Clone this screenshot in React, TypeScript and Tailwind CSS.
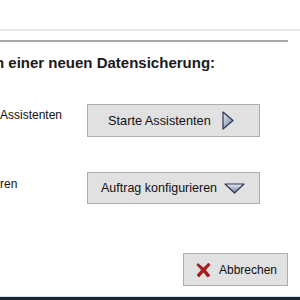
import type { ReactNode } from "react";

function ArrowRight() {
  return (
    <svg width="12" height="19" viewBox="0 0 12 19">
      <defs>
        <linearGradient id="gr" x1="0" y1="0" x2="1" y2="1">
          <stop offset="0" stopColor="#e4eaf4" />
          <stop offset="1" stopColor="#6c7c9c" />
        </linearGradient>
      </defs>
      <path d="M1 1 L11 9.5 L1 18 Z" fill="url(#gr)" stroke="#2c3654" strokeWidth="1.2" strokeLinejoin="round" />
    </svg>
  );
}

function ArrowDown() {
  return (
    <svg width="21" height="11" viewBox="0 0 21 11">
      <defs>
        <linearGradient id="gd" x1="0" y1="0" x2="0" y2="1">
          <stop offset="0" stopColor="#e8edf5" />
          <stop offset="1" stopColor="#6a7a9a" />
        </linearGradient>
      </defs>
      <path d="M1 1 L20 1 L10.5 10 Z" fill="url(#gd)" stroke="#2c3654" strokeWidth="1.2" strokeLinejoin="round" />
    </svg>
  );
}

function CrossIcon() {
  return (
    <svg width="15" height="16" viewBox="0 0 15 16">
      <path d="M2 1.5 L7.5 6 L12.5 1 L14 3 L9.5 8 L14 13.5 L11.5 15 L7.5 10 L3 15 L1 13 L5.5 8 L0.8 3 Z" fill="#b01a1a" stroke="#7a0c0c" strokeWidth="0.6" strokeLinejoin="round" />
    </svg>
  );
}

function WinButton({ className, children }: { className: string; children: ReactNode }) {
  return (
    <div className={"flex items-center border border-[#adadad] bg-[#e1e1e1] text-[#111] " + className}>
      {children}
    </div>
  );
}

export default function App() {
  return (
    <div className="w-[300px] h-[300px] overflow-hidden bg-white flex flex-col font-['Liberation_Sans',sans-serif]">
      <div className="h-[29px]" />
      <div className="h-[2px] bg-[#e6e6e6]" />
      <div className="h-[9px]" />
      <div className="h-[2px] w-[288px] bg-[#a8a8a8]" />
      <div className="h-[12px]" />
      <div className="ml-[-5px] text-[15px] font-bold text-[#1a1a1a] leading-[17px] whitespace-nowrap">n einer neuen Datensicherung:</div>

      <div className="h-[33px]" />
      <div className="flex items-start h-[33px]">
        <div className="w-[87px] text-[12px] text-[#111] leading-[14px] pt-[4px] whitespace-nowrap">Assistenten</div>
        <WinButton className="w-[173px] h-[33px] gap-[11px] pl-[20px] text-[12.75px]">
          <span>Starte Assistenten</span>
          <ArrowRight />
        </WinButton>
      </div>

      <div className="h-[35px]" />
      <div className="flex items-start h-[32px]">
        <div className="w-[87px] text-[12px] text-[#111] leading-[14px] pt-[5px] whitespace-nowrap">ren</div>
        <WinButton className="w-[173px] h-[32px] gap-[7px] pl-[13px] text-[12.5px]">
          <span>Auftrag konfigurieren</span>
          <ArrowDown />
        </WinButton>
      </div>

      <div className="h-[49px]" />
      <div className="flex justify-end pr-[12px]">
        <WinButton className="w-[105px] h-[33px] gap-[8px] pl-[12px] text-[12px]">
          <CrossIcon />
          <span>Abbrechen</span>
        </WinButton>
      </div>

      <div className="flex-1" />
      <div className="h-[1px] bg-[#cfe3ee]" />
      <div className="h-[3px] bg-[#1c2633]" />
    </div>
  );
}
